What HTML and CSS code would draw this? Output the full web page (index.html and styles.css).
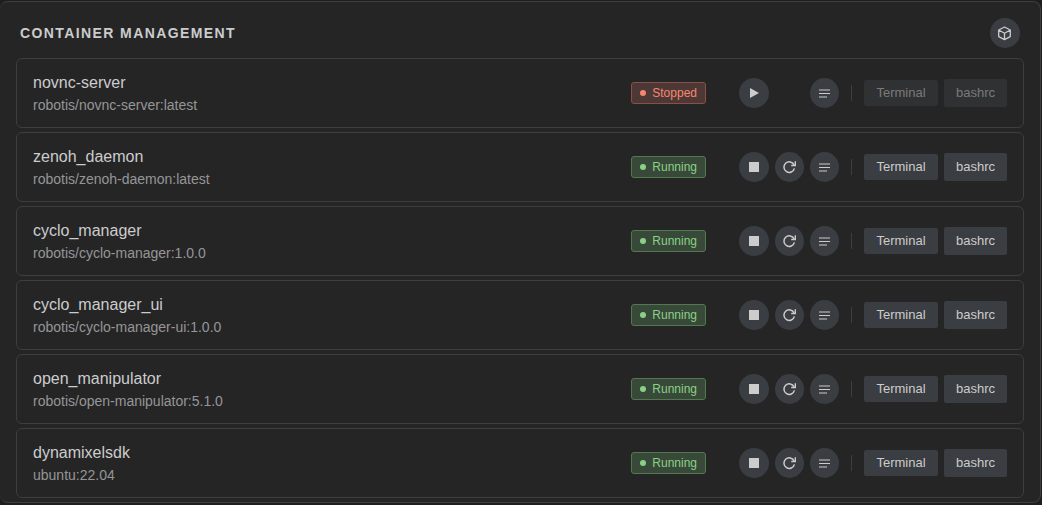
FILE: index.html
```html
<!DOCTYPE html>
<html lang="en">
<head>
    <meta charset="UTF-8">
    <meta name="viewport" content="width=device-width, initial-scale=1.0">
    <title>Container Management</title>
    <link rel="stylesheet" href="styles.css">
</head>
<body>
    <!-- Shared icons -->
    <svg class="icon-defs" aria-hidden="true">
        <symbol id="icon-play" viewBox="0 0 16 16"><path d="M4 3v10l9-5z" fill="currentColor"/></symbol>
        <symbol id="icon-stop" viewBox="0 0 16 16"><path d="M3 3h10v10H3z" fill="currentColor"/></symbol>
        <symbol id="icon-restart" viewBox="0 0 15 16">
            <path d="M12 5.8A5.3 5.3 0 1 0 12.4 9.4" fill="none" stroke="currentColor" stroke-width="1.5"/>
            <path d="M13.3 2.2v4.3H9.2" fill="none" stroke="currentColor" stroke-width="1.4"/>
        </symbol>
        <symbol id="icon-logs" viewBox="0 0 15 16"><path d="M2 5h11M2 8.5h11M2 12h8" fill="none" stroke="currentColor" stroke-width="1.2"/></symbol>
        <symbol id="icon-box" viewBox="0 0 16 16"><path d="M7.5 2l5.8 3v6.6l-5.8 3-5.8-3V5zM1.7 5l5.8 3.2L13.3 5M7.5 8.2v6.4" fill="none" stroke="currentColor" stroke-width="1.3" stroke-linejoin="round"/></symbol>
    </svg>

    <main class="panel">
        <header class="panel-header">
            <h1>Container Management</h1>
            <button class="icon-button" aria-label="Images"><svg><use href="#icon-box"/></svg></button>
        </header>

        <ul class="container-list">
            <li class="container-card">
                <div class="info">
                    <div class="name">novnc-server</div>
                    <div class="image">robotis/novnc-server:latest</div>
                </div>
                <span class="status stopped">Stopped</span>
                <div class="actions">
                    <button class="icon-button" aria-label="Start"><svg><use href="#icon-play"/></svg></button>
                    <button class="icon-button small" aria-label="Logs"><svg><use href="#icon-logs"/></svg></button>
                    <span class="divider"></span>
                    <button class="text-button" disabled>Terminal</button>
                    <button class="text-button bashrc" disabled>bashrc</button>
                </div>
            </li>
            <li class="container-card">
                <div class="info">
                    <div class="name">zenoh_daemon</div>
                    <div class="image">robotis/zenoh-daemon:latest</div>
                </div>
                <span class="status running">Running</span>
                <div class="actions">
                    <button class="icon-button" aria-label="Stop"><svg><use href="#icon-stop"/></svg></button>
                    <button class="icon-button small" aria-label="Restart"><svg><use href="#icon-restart"/></svg></button>
                    <button class="icon-button small" aria-label="Logs"><svg><use href="#icon-logs"/></svg></button>
                    <span class="divider"></span>
                    <button class="text-button">Terminal</button>
                    <button class="text-button bashrc">bashrc</button>
                </div>
            </li>
            <li class="container-card">
                <div class="info">
                    <div class="name">cyclo_manager</div>
                    <div class="image">robotis/cyclo-manager:1.0.0</div>
                </div>
                <span class="status running">Running</span>
                <div class="actions">
                    <button class="icon-button" aria-label="Stop"><svg><use href="#icon-stop"/></svg></button>
                    <button class="icon-button small" aria-label="Restart"><svg><use href="#icon-restart"/></svg></button>
                    <button class="icon-button small" aria-label="Logs"><svg><use href="#icon-logs"/></svg></button>
                    <span class="divider"></span>
                    <button class="text-button">Terminal</button>
                    <button class="text-button bashrc">bashrc</button>
                </div>
            </li>
            <li class="container-card">
                <div class="info">
                    <div class="name">cyclo_manager_ui</div>
                    <div class="image">robotis/cyclo-manager-ui:1.0.0</div>
                </div>
                <span class="status running">Running</span>
                <div class="actions">
                    <button class="icon-button" aria-label="Stop"><svg><use href="#icon-stop"/></svg></button>
                    <button class="icon-button small" aria-label="Restart"><svg><use href="#icon-restart"/></svg></button>
                    <button class="icon-button small" aria-label="Logs"><svg><use href="#icon-logs"/></svg></button>
                    <span class="divider"></span>
                    <button class="text-button">Terminal</button>
                    <button class="text-button bashrc">bashrc</button>
                </div>
            </li>
            <li class="container-card">
                <div class="info">
                    <div class="name">open_manipulator</div>
                    <div class="image">robotis/open-manipulator:5.1.0</div>
                </div>
                <span class="status running">Running</span>
                <div class="actions">
                    <button class="icon-button" aria-label="Stop"><svg><use href="#icon-stop"/></svg></button>
                    <button class="icon-button small" aria-label="Restart"><svg><use href="#icon-restart"/></svg></button>
                    <button class="icon-button small" aria-label="Logs"><svg><use href="#icon-logs"/></svg></button>
                    <span class="divider"></span>
                    <button class="text-button">Terminal</button>
                    <button class="text-button bashrc">bashrc</button>
                </div>
            </li>
            <li class="container-card">
                <div class="info">
                    <div class="name">dynamixelsdk</div>
                    <div class="image">ubuntu:22.04</div>
                </div>
                <span class="status running">Running</span>
                <div class="actions">
                    <button class="icon-button" aria-label="Stop"><svg><use href="#icon-stop"/></svg></button>
                    <button class="icon-button small" aria-label="Restart"><svg><use href="#icon-restart"/></svg></button>
                    <button class="icon-button small" aria-label="Logs"><svg><use href="#icon-logs"/></svg></button>
                    <span class="divider"></span>
                    <button class="text-button">Terminal</button>
                    <button class="text-button bashrc">bashrc</button>
                </div>
            </li>
        </ul>
    </main>
</body>
</html>
```
FILE: styles.css
```css
* {
    box-sizing: border-box;
}
body {
    margin: 0;
    padding: 1px 1px 0 0;
    background-color: #1e1e1e;
    color: #cccccc;
    font-family: "Liberation Sans", Arial, sans-serif;
}
.icon-defs {
    display: none;
}
.panel {
    padding: 16px 16px 4px;
    background-color: #252526;
    border: 1px solid #3e3e42;
    border-left: none;
    border-radius: 8px;
}
.panel-header {
    display: flex;
    align-items: center;
    justify-content: space-between;
    padding: 0 4px;
    margin-bottom: 10px;
}
h1 {
    margin: 0;
    font-size: 14px;
    font-weight: bold;
    letter-spacing: 0.1em;
    text-transform: uppercase;
}
.container-list {
    display: flex;
    flex-direction: column;
    gap: 4px;
    margin: 0;
    padding: 0;
    list-style: none;
}
.container-card {
    display: flex;
    align-items: center;
    padding: 12px 16px;
    border: 1px solid #3e3e42;
    border-radius: 6px;
}
.info {
    flex: 1;
    min-width: 0;
}
.name {
    font-size: 16px;
    line-height: 24px;
}
.image {
    color: #969696;
    font-size: 14px;
    line-height: 20px;
}
.status {
    display: flex;
    align-items: center;
    gap: 6px;
    padding: 0 8px;
    border: 1px solid;
    border-radius: 3px;
    font-size: 12px;
    line-height: 20px;
}
.status::before {
    content: "";
    width: 6px;
    height: 6px;
    border-radius: 50%;
    background-color: currentColor;
}
.running {
    color: #89d185;
    background-color: #394939;
    border-color: #52784f;
}
.stopped {
    color: #f48771;
    background-color: #4e3835;
    border-color: #885046;
}
.actions {
    display: flex;
    align-items: center;
    justify-content: flex-end;
    gap: 6px;
    width: 268px;
    margin-left: 33px;
}
.icon-button {
    display: flex;
    align-items: center;
    justify-content: center;
    width: 30px;
    height: 30px;
    padding: 0;
    border: none;
    border-radius: 50%;
    background-color: #3a3d41;
    color: #cccccc;
    cursor: pointer;
}
.icon-button.small {
    width: 29px;
}
.icon-button svg {
    width: 16px;
    height: 16px;
}
.icon-button.small svg {
    width: 15px;
}
/* Keeps the start/stop button on the left when restart is missing */
.icon-button:first-child {
    margin-right: auto;
}
.divider {
    width: 1px;
    height: 16px;
    margin: 0 6px;
    background-color: #3e3e42;
}
.text-button {
    min-width: 74px;
    padding: 0;
    border: none;
    border-radius: 2px;
    background-color: #3a3d41;
    color: #cccccc;
    font-family: inherit;
    font-size: 13px;
    line-height: 26px;
    cursor: pointer;
}
.text-button.bashrc {
    min-width: 63px;
    line-height: 28px;
}
.icon-button:hover,
.text-button:enabled:hover {
    background-color: #45494e;
}
.text-button:disabled {
    opacity: 0.5;
    cursor: not-allowed;
}
```
